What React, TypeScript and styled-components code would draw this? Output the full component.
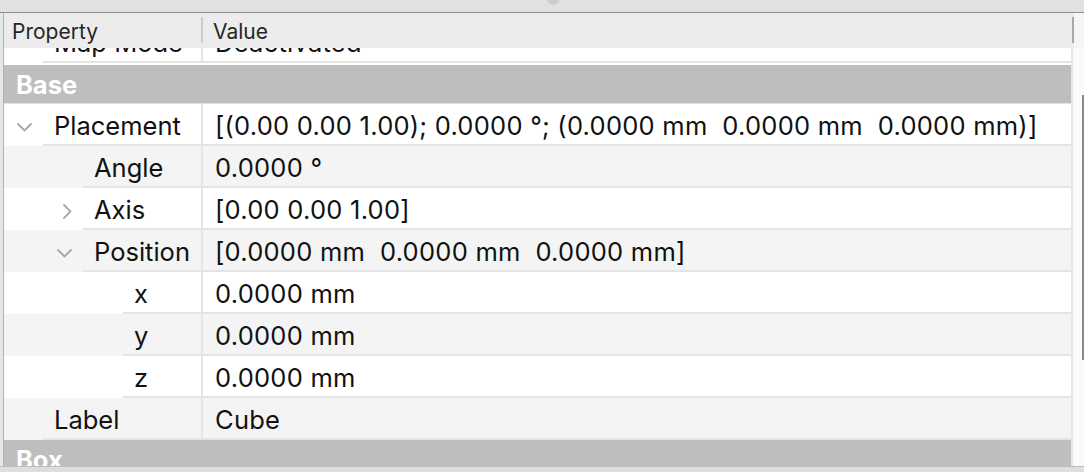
import React from "react";
import styled, { createGlobalStyle } from "styled-components";

const GlobalStyle = createGlobalStyle`
  html, body {
    margin: 0;
    padding: 0;
    background: #e2e2e2;
  }
  body {
    font-family: Inter, "Noto Sans", "Liberation Sans", sans-serif;
    -webkit-font-smoothing: antialiased;
  }
`;

const Window = styled.div`
  width: 1084px;
  height: 472px;
  display: flex;
  flex-direction: column;
  overflow: hidden;
  background: #dedede;
`;

const TopStrip = styled.div`
  position: relative;
  height: 12px;
  flex: none;
  background: #e1e1e1;
  border-bottom: 1px solid #8f8f8f;
`;

const Knob = styled.div`
  position: absolute;
  left: 547px;
  top: -7px;
  width: 12px;
  height: 12px;
  border-radius: 50%;
  background: #cdcdcd;
`;

const Frame = styled.div`
  height: 453px;
  flex: none;
  display: flex;
  padding-left: 3px;
  background: #e6e6e6;
  border-bottom: 1px solid #bdbdbd;
`;

const Panel = styled.div`
  flex: 1;
  display: flex;
  flex-direction: column;
  border-left: 1px solid #b4b4b4;
  overflow: hidden;
  background: #ffffff;
`;

const Header = styled.div`
  height: 35px;
  flex: none;
  display: flex;
  align-items: stretch;
  background: #ececec;
  font-size: 21px;
  color: #262626;
`;

const HeaderCell = styled.div<{ $width?: number }>`
  ${(p) => (p.$width ? `width: ${p.$width}px; flex: none;` : "flex: 1;")}
  display: flex;
  align-items: center;
  padding-left: ${(p) => (p.$width ? 8 : 10)}px;
  padding-top: 1px;
  box-sizing: border-box;
`;

const HeaderDivider = styled.div<{ $dark?: boolean }>`
  width: 2px;
  flex: none;
  margin: 4px 0 5px;
  background: ${(p) => (p.$dark ? "#a9a9a9" : "#cbcbcb")};
`;

const HeaderFiller = styled.div`
  width: 10px;
  flex: none;
  background: #f5f5f5;
`;

const Body = styled.div`
  flex: 1;
  display: flex;
  min-height: 0;
`;

const Rows = styled.div`
  flex: 1;
  overflow: hidden;
  background: #ffffff;
`;

const RowList = styled.div`
  margin-top: -27px;
  display: flex;
  flex-direction: column;
`;

const Row = styled.div<{ $alt: boolean }>`
  height: 42px;
  display: flex;
  background: ${(p) => (p.$alt ? "#f3f4f3" : "#ffffff")};
  font-size: 25.5px;
  color: #111;
`;

const LabelCell = styled.div`
  width: 197px;
  flex: none;
  display: flex;
  border-right: 2px solid #e4e4e4;
`;

const Twisty = styled.div<{ $indent: number }>`
  width: ${(p) => p.$indent}px;
  flex: none;
  display: flex;
  align-items: center;
  justify-content: flex-end;
  padding-right: 11px;
  padding-top: 4px;
  box-sizing: border-box;
`;

const LabelText = styled.div`
  flex: 1;
  padding-left: 11px;
  padding-top: 2px;
  height: 38px;
  line-height: 40px;
  border-bottom: 2px solid #e4e4e4;
  white-space: nowrap;
  overflow: hidden;
`;

const ValueCell = styled.div`
  flex: 1;
  padding-left: 12px;
  padding-top: 2px;
  height: 38px;
  line-height: 40px;
  letter-spacing: 0.25px;
  border-bottom: 2px solid #e4e4e4;
  white-space: pre;
  overflow: hidden;
`;

const GroupRow = styled.div<{ $top: number }>`
  margin-top: ${(p) => p.$top}px;
  height: 38px;
  flex: none;
  background: #bebebe;
  border-bottom: 1px solid #e2e2e2;
  padding-left: 12px;
  font-size: 25.5px;
  font-weight: 700;
  color: #ffffff;
  line-height: 40px;
`;

const Track = styled.div`
  position: relative;
  width: 11px;
  flex: none;
  background: #fafafa;
  border-left: 2px solid #e6e6e6;
`;

const Thumb = styled.div`
  position: absolute;
  right: 0;
  top: 47px;
  width: 2px;
  height: 265px;
  background: #8a8a8a;
`;

function Chevron({ open }: { open: boolean }) {
  return open ? (
    <svg width="15" height="9" viewBox="0 0 15 9">
      <polyline
        points="1,1 7.5,7.5 14,1"
        fill="none"
        stroke="#a8a8a8"
        strokeWidth="1.8"
        strokeLinecap="round"
        strokeLinejoin="round"
      />
    </svg>
  ) : (
    <svg width="9" height="15" viewBox="0 0 9 15">
      <polyline
        points="1,1 7.5,7.5 1,14"
        fill="none"
        stroke="#a8a8a8"
        strokeWidth="1.8"
        strokeLinecap="round"
        strokeLinejoin="round"
      />
    </svg>
  );
}

type Item =
  | { kind: "group"; title: string; top: number }
  | {
      kind: "prop";
      label: string;
      value: string;
      depth: number;
      twisty?: "open" | "closed";
      alt: boolean;
    };

const items: Item[] = [
  { kind: "prop", label: "Map Mode", value: "Deactivated", depth: 0, alt: false },
  { kind: "group", title: "Base", top: 2 },
  {
    kind: "prop",
    label: "Placement",
    value: "[(0.00 0.00 1.00); 0.0000 °; (0.0000 mm  0.0000 mm  0.0000 mm)]",
    depth: 0,
    twisty: "open",
    alt: false,
  },
  { kind: "prop", label: "Angle", value: "0.0000 °", depth: 1, alt: true },
  { kind: "prop", label: "Axis", value: "[0.00 0.00 1.00]", depth: 1, twisty: "closed", alt: false },
  {
    kind: "prop",
    label: "Position",
    value: "[0.0000 mm  0.0000 mm  0.0000 mm]",
    depth: 1,
    twisty: "open",
    alt: true,
  },
  { kind: "prop", label: "x", value: "0.0000 mm", depth: 2, alt: false },
  { kind: "prop", label: "y", value: "0.0000 mm", depth: 2, alt: true },
  { kind: "prop", label: "z", value: "0.0000 mm", depth: 2, alt: false },
  { kind: "prop", label: "Label", value: "Cube", depth: 0, alt: true },
  { kind: "group", title: "Box", top: 0 },
];

export default function App(): JSX.Element {
  return (
    <>
      <GlobalStyle />
      <Window>
        <TopStrip>
          <Knob />
        </TopStrip>
        <Frame>
          <Panel>
            <Header>
              <HeaderCell $width={197}>Property</HeaderCell>
              <HeaderDivider />
              <HeaderCell>Value</HeaderCell>
              <HeaderDivider $dark />
              <HeaderFiller />
            </Header>
            <Body>
              <Rows>
                <RowList>
                  {items.map((it, i) =>
                    it.kind === "group" ? (
                      <GroupRow key={i} $top={it.top}>
                        {it.title}
                      </GroupRow>
                    ) : (
                      <Row key={i} $alt={it.alt}>
                        <LabelCell>
                          <Twisty $indent={39 + it.depth * 40}>
                            {it.twisty && <Chevron open={it.twisty === "open"} />}
                          </Twisty>
                          <LabelText>{it.label}</LabelText>
                        </LabelCell>
                        <ValueCell>{it.value}</ValueCell>
                      </Row>
                    )
                  )}
                </RowList>
              </Rows>
              <Track>
                <Thumb />
              </Track>
            </Body>
          </Panel>
        </Frame>
      </Window>
    </>
  );
}
